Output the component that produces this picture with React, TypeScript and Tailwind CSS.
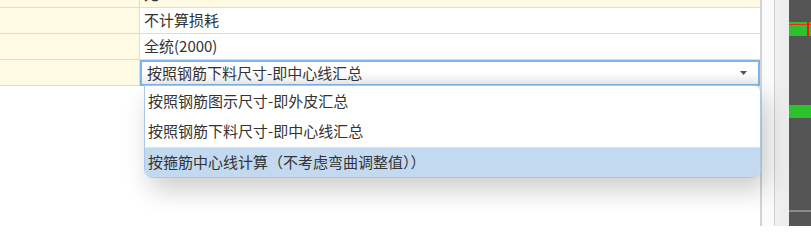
import React from "react";

const font = { fontFamily: '"Microsoft YaHei","Noto Sans CJK SC","Noto Sans",sans-serif' };

function Row({ value }: { value: string }) {
  return (
    <div className="flex h-[26px] border-b border-[#dcdcdc]">
      <div className="w-[140px] shrink-0 bg-[#fefae4] border-r border-[#dcdcdc]" />
      <div className="flex-1 bg-white flex items-center pl-[4px] text-[15px] text-[#333]">{value}</div>
    </div>
  );
}

export default function App() {
  const items = [
    "按照钢筋图示尺寸-即外皮汇总",
    "按照钢筋下料尺寸-即中心线汇总",
    "按箍筋中心线计算（不考虑弯曲调整值））",
  ];
  return (
    <div className="w-[811px] h-[226px] flex bg-white overflow-hidden" style={font}>
      <div className="relative w-[760px] shrink-0 h-full">
        {/* row 0 clipped */}
        <div className="flex h-[8px] border-b border-[#dcdcdc] overflow-hidden">
          <div className="w-[140px] shrink-0 bg-[#fefae4] border-r border-[#dcdcdc]" />
          <div className="flex-1 bg-[#fefae4] pl-[4px] text-[15px] text-[#333] leading-[26px] -mt-[19px]">无</div>
        </div>
        <Row value="不计算损耗" />
        <Row value="全统(2000)" />
        <div className="flex h-[26px]">
          <div className="w-[140px] shrink-0 bg-[#fefae4] border-r border-b border-[#dcdcdc]" />
          <div className="flex-1 flex items-center justify-between border-2 border-[#7eb4ea] bg-gradient-to-b from-white via-white to-[#ececec] pl-[5px] pr-[11px] text-[15px] text-[#333]">
            <span>按照钢筋下料尺寸-即中心线汇总</span>
            <svg width="7" height="4" viewBox="0 0 7 4"><path d="M0 0 L7 0 L3.5 4 Z" fill="#555" /></svg>
          </div>
        </div>
        {/* dropdown */}
        <div className="absolute left-[144px] top-[85px] w-[617px] h-[93px] bg-white border border-[#a8c8e4] rounded-b-[9px] rounded-tr-[6px] overflow-hidden shadow-[6px_12px_26px_rgba(0,0,0,0.2)] text-[15px] text-[#333] flex flex-col">
          <div className="h-[30px] flex items-center pl-[3px]">{items[0]}</div>
          <div className="h-[31px] flex items-center pl-[3px]">{items[1]}</div>
          <div className="flex-1 flex items-center pl-[3px] bg-[#c3d9f0] border-t border-[#d8e6f4]">{items[2]}</div>
        </div>
      </div>
      <div className="w-[2px] bg-[#d4d4d4] shrink-0" />
      <div className="w-[12px] bg-[#fbfbfb] shrink-0" />
      <div className="w-[1px] bg-[#cfcfcf] shrink-0" />
      <div className="w-[14px] bg-gradient-to-r from-[#eef2ee] to-[#ececec] shrink-0" />
      <div className="flex-1 bg-[#555555] flex flex-col">
        <div className="h-[22px]" />
        <div className="relative h-[14px] bg-[#2cc22c]">
          <div className="absolute left-0 right-0 top-[2px] h-[1px] bg-[#ff2020]" />
          <div className="absolute right-[2px] top-0 bottom-0 w-[2px] bg-[#ff1010]" />
        </div>
        <div className="h-[69px]" />
        <div className="h-[13px] bg-[#2cc22c]" />
        <div className="h-[92px]" />
        <div className="h-[2px] bg-[#8a8a8a]" />
      </div>
    </div>
  );
}
